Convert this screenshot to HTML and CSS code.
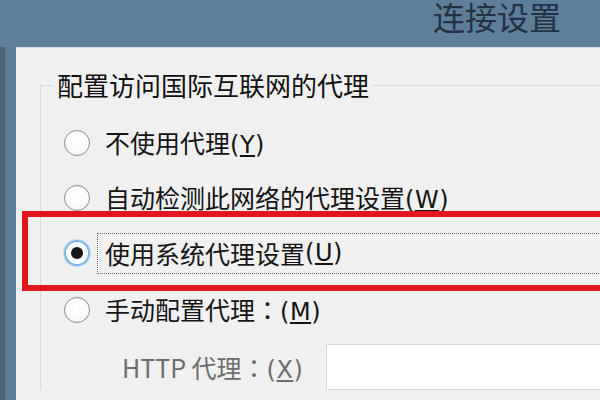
FILE: index.html
```html
<!DOCTYPE html>
<html lang="zh-CN">
<head>
<meta charset="utf-8">
<title>连接设置</title>
<link rel="stylesheet" href="styles.css">
</head>
<body>
<div class="window">
  <div class="titlebar">
    <span class="title">连接设置</span>
  </div>
  <div class="frame">
    <div class="edge"></div>
    <div class="panel">
      <fieldset class="group">
        <legend class="legend">配置访问国际互联网的代理</legend>
        <div class="options">
          <div class="row">
            <span class="radio"></span>
            <span class="label">不使用代理<span class="key">(<u>Y</u>)</span></span>
          </div>
          <div class="row">
            <span class="radio"></span>
            <span class="label">自动检测此网络的代理设置<span class="key">(<u>W</u>)</span></span>
          </div>
          <div class="row">
            <span class="radio checked"></span>
            <span class="label focus">使用系统代理设置<span class="key">(<u>U</u>)</span></span>
            <span class="highlight"></span>
          </div>
          <div class="row">
            <span class="radio"></span>
            <span class="label">手动配置代理<span class="colon" lang="zh-Hant">：</span><span class="key">(<u>M</u>)</span></span>
          </div>
          <div class="proxy-row">
            <span class="proxy-label">HTTP 代理<span class="colon" lang="zh-Hant">：</span><span class="key">(<u>X</u>)</span></span>
            <span class="proxy-input"></span>
          </div>
        </div>
      </fieldset>
    </div>
  </div>
</div>
</body>
</html>
```
FILE: styles.css
```css
html, body {
  margin: 0;
  padding: 0;
}
body {
  width: 600px;
  height: 400px;
  overflow: hidden;
  font-family: "Noto Sans CJK SC", "Noto Sans", sans-serif;
  color: #141414;
}
.window {
  width: 600px;
  height: 400px;
  display: flex;
  flex-direction: column;
  background: #5e7f99;
}
.titlebar {
  height: 47px;
  flex: none;
  display: flex;
  justify-content: flex-end;
  align-items: flex-start;
  padding-right: 39px;
  overflow: hidden;
}
.title {
  font-size: 32px;
  line-height: 32px;
  margin-top: 0;
  color: #223244;
}
.frame {
  flex: 1;
  display: flex;
  min-height: 0;
}
.edge {
  width: 11px;
  flex: none;
  background: #5b7d98;
  border-left: 5px solid #506375;
}
.panel {
  flex: 1;
  background: #f0f0f0;
  border-top: 1px solid #d3dce5;
  padding: 21px 0 0 24px;
  overflow: hidden;
}
.group {
  margin: 0;
  padding: 0;
  width: 700px;
  min-width: 700px;
  border: 1px solid #d9d9d9;
  border-right: none;
  border-bottom: none;
}
.legend {
  margin-left: 12px;
  padding: 0 3px 0 4px;
  font-size: 26px;
  line-height: 32px;
  color: #111111;
}
.options {
  display: flex;
  flex-direction: column;
  gap: 21px;
  padding-top: 25px;
}
.row {
  position: relative;
  height: 34px;
  display: flex;
  align-items: center;
  padding-left: 23px;
  font-size: 25px;
}
.row:nth-child(4) {
  margin-top: 2px;
}
.key {
  font-family: "DejaVu Sans", sans-serif;
  font-size: 24px;
  letter-spacing: 0.5px;
}
.colon {
  font-family: "Noto Sans CJK TC", "Noto Sans CJK SC", sans-serif;
}
.radio {
  flex: none;
  width: 26px;
  height: 26px;
  box-sizing: border-box;
  border-radius: 50%;
  border: 1.5px solid #8e8e8e;
  background: radial-gradient(circle at 50% 40%, #ffffff 0%, #fafafa 60%, #ececec 100%);
}
.radio.checked {
  display: flex;
  align-items: center;
  justify-content: center;
  border: 2px solid #7db7ea;
  box-shadow: 0 0 0 1px rgba(125, 183, 234, 0.35);
  background: #fff;
}
.radio.checked::after {
  content: "";
  width: 12px;
  height: 12px;
  border-radius: 50%;
  background: #141414;
}
.label {
  margin-left: 7px;
  padding-left: 7px;
  border: 1px dotted transparent;
  line-height: 32px;
  white-space: nowrap;
}
.label.focus {
  flex: 1;
  height: 41px;
  box-sizing: border-box;
  display: flex;
  align-items: center;
  border-color: #6e6e6e;
}
.highlight {
  position: absolute;
  left: -19px;
  right: -20px;
  top: -25px;
  bottom: -21px;
  border: 6px solid #e3161d;
  pointer-events: none;
}
.proxy-row {
  display: flex;
  align-items: center;
  gap: 23px;
  margin-top: -4px;
  padding-left: 81px;
  font-size: 25px;
}
.proxy-label {
  color: #6d6d6d;
  white-space: nowrap;
}
.proxy-input {
  width: 400px;
  height: 46px;
  box-sizing: border-box;
  background: #ffffff;
  border: 1px solid #d8d8d8;
}
```
